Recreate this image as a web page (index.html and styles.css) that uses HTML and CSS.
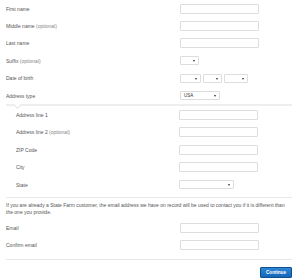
FILE: index.html
```html
<!DOCTYPE html>
<html lang="en">
<head>
    <meta charset="UTF-8">
    <title>Personal information</title>
    <link rel="stylesheet" href="styles.css">
</head>
<body>
    <form class="form">
        <div class="row">
            <label>First name</label>
            <input type="text" class="field">
        </div>
        <div class="row">
            <label>Middle name <span class="opt">(optional)</span></label>
            <input type="text" class="field">
        </div>
        <div class="row">
            <label>Last name</label>
            <input type="text" class="field">
        </div>
        <div class="row">
            <label>Suffix <span class="opt">(optional)</span></label>
            <div class="select suffix"></div>
        </div>
        <div class="row">
            <label>Date of birth</label>
            <div class="dob">
                <div class="select month"></div>
                <div class="select day"></div>
                <div class="select year"></div>
            </div>
        </div>
        <div class="row">
            <label>Address type</label>
            <div class="select country">USA</div>
        </div>

        <div class="address">
            <span class="caret"></span>
            <div class="row sub">
                <label>Address line 1</label>
                <input type="text" class="field">
            </div>
            <div class="row sub">
                <label>Address line 2 <span class="opt">(optional)</span></label>
                <input type="text" class="field">
            </div>
            <div class="row sub">
                <label>ZIP Code</label>
                <input type="text" class="field">
            </div>
            <div class="row sub">
                <label>City</label>
                <input type="text" class="field">
            </div>
            <div class="row sub">
                <label>State</label>
                <div class="select state"></div>
            </div>
        </div>

        <div class="email">
            <p class="note">If you are already a State Farm customer, the email address we have on record will be used to contact you if it is different than the one you provide.</p>
            <div class="row">
                <label>Email</label>
                <input type="text" class="field">
            </div>
            <div class="row">
                <label>Confirm email</label>
                <input type="text" class="field">
            </div>
        </div>

        <div class="actions">
            <button type="button" class="continue">Continue</button>
        </div>
    </form>
</body>
</html>
```

FILE: styles.css
```css
body {
    margin: 0;
    background: #fff;
    font-family: "Liberation Sans", Arial, sans-serif;
    font-size: 5px;
    color: #555;
}
.form {
    padding: 0 8px 0 6px;
}
.row {
    display: flex;
    align-items: center;
    height: 17.4px;
}
.row label {
    width: 174px;
    flex-shrink: 0;
}
.opt {
    color: #888;
}
.field {
    box-sizing: border-box;
    width: 79px;
    height: 10px;
    margin: 0;
    padding: 0;
    border: 1px solid #ddd;
    border-radius: 1px;
    background: #fff;
}
.select {
    position: relative;
    box-sizing: border-box;
    height: 9px;
    border: 1px solid #ddd;
    border-radius: 1px;
    background: #fff;
    padding-left: 3px;
    line-height: 7px;
    font-size: 4.5px;
    color: #333;
}
.select::after {
    content: "";
    position: absolute;
    right: 3px;
    top: 3px;
    border-left: 1.5px solid transparent;
    border-right: 1.5px solid transparent;
    border-top: 2px solid #333;
}
.suffix {
    width: 19px;
}
.dob {
    display: flex;
    gap: 2px;
}
.month {
    width: 21px;
}
.day {
    width: 19px;
}
.year {
    width: 24px;
}
.country {
    width: 40px;
}
.state {
    width: 55px;
}
.address {
    position: relative;
    border-top: 2px solid #eee;
    margin-top: 0;
    padding-top: 0;
}
.caret {
    position: absolute;
    left: 9px;
    top: -3px;
    width: 4px;
    height: 4px;
    background: #fff;
    border-right: 1px solid #e4e4e4;
    border-bottom: 1px solid #e4e4e4;
    transform: rotate(45deg);
}
.row.sub label {
    width: 163px;
    padding-left: 10px;
}
.email {
    border-top: 1px solid #e8e8e8;
    margin-top: 4px;
}
.note {
    margin: 4px 0 3px;
    line-height: 7px;
}
.actions {
    border-top: 1px solid #e8e8e8;
    margin-top: 5px;
    display: flex;
    justify-content: flex-end;
    padding-top: 7px;
}
.continue {
    width: 32px;
    height: 11px;
    padding: 0;
    border: 1px solid #0d4f91;
    border-radius: 1px;
    background: linear-gradient(#2e86d6, #1667b8);
    color: #fff;
    font-family: "Liberation Sans", Arial, sans-serif;
    font-size: 4.6px;
    font-weight: bold;
}
```
